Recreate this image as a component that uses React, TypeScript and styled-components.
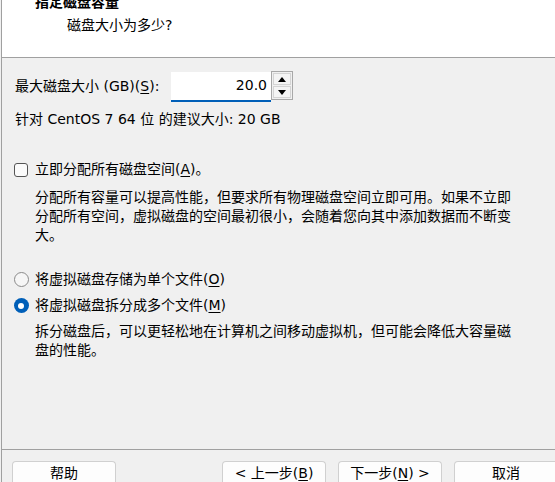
import styled, { createGlobalStyle } from "styled-components";

const GlobalStyle = createGlobalStyle`
  html, body {
    margin: 0;
    padding: 0;
    overflow: hidden;
    background: #f0f0f0;
  }
  body {
    font-family: "DejaVu Sans", "Noto Sans CJK SC", sans-serif;
    font-size: 14px;
    color: #000;
  }
`;

const Window = styled.div`
  width: 566px;
  height: 500px;
  margin-left: 1px;
  border-left: 1px solid #a0a0a0;
  display: flex;
  flex-direction: column;
  background: #f0f0f0;
  line-height: 19px;
`;

const Header = styled.header`
  height: 57px;
  flex-shrink: 0;
  background: #fff;
  border-bottom: 1px solid #a0a0a0;
  overflow: hidden;
`;

const Title = styled.div`
  margin-top: -7px;
  padding-left: 33px;
  font-weight: bold;
`;

const Subtitle = styled.div`
  margin-top: 4px;
  padding-left: 65px;
`;

const Content = styled.main`
  flex: 1;
  padding: 13px 0 0 11px;
`;

const SizeRow = styled.div`
  display: flex;
  align-items: flex-start;
  padding-left: 2px;
`;

const SizeLabel = styled.label`
  flex: 0 0 156px;
  margin-top: 6px;
  white-space: nowrap;
`;

const SizeInput = styled.input`
  box-sizing: border-box;
  width: 100px;
  height: 30px;
  margin: 1px 0 0;
  padding: 0 4px 2px 0;
  border: none;
  border-bottom: 2px solid #005fb8;
  background: #fff;
  font: inherit;
  text-align: right;
  color: #000;
  outline: none;
`;

const Spinner = styled.div`
  box-sizing: border-box;
  width: 22px;
  height: 29px;
  border: 1px solid #a8a8a8;
  padding: 1px;
  display: flex;
  flex-direction: column;
  gap: 1px;
`;

const SpinButton = styled.div`
  flex: 1;
  border: 1px solid #d4d4d4;
  background: #f4f4f4;
  display: flex;
  align-items: center;
  justify-content: center;
`;

const Hint = styled.div`
  margin-top: 8px;
  padding-left: 2px;
`;

const OptionRow = styled.div<{ $top: number }>`
  display: flex;
  align-items: center;
  height: 19px;
  margin-top: ${(p) => p.$top}px;
`;

const ControlSlot = styled.span`
  flex: 0 0 16px;
  display: flex;
  align-items: center;
  justify-content: center;
`;

const CheckBox = styled.span`
  box-sizing: border-box;
  width: 14px;
  height: 14px;
  border: 1px solid #555;
  border-radius: 3px;
  background: #fbfbfb;
`;

const Radio = styled.span<{ $checked?: boolean }>`
  box-sizing: border-box;
  width: 15px;
  height: 15px;
  border-radius: 50%;
  border: ${(p) => (p.$checked ? "none" : "1px solid #8a8a8a")};
  background: ${(p) => (p.$checked ? "#005fb8" : "#f6f6f6")};
  display: flex;
  align-items: center;
  justify-content: center;
`;

const RadioDot = styled.span`
  width: 6px;
  height: 6px;
  border-radius: 50%;
  background: #fff;
`;

const OptionLabel = styled.span`
  margin-left: 6px;
  white-space: nowrap;
`;

const Description = styled.p<{ $top: number }>`
  margin: ${(p) => p.$top}px 0 0 22px;
  width: 484px;
`;

const Key = styled.u`
  text-underline-offset: 2px;
`;

const Footer = styled.footer`
  box-sizing: border-box;
  height: 51px;
  flex-shrink: 0;
  border-top: 1px solid #a0a0a0;
  padding: 11px 10px 0;
  display: flex;
  justify-content: space-between;
  align-items: flex-start;
`;

const ButtonGroup = styled.div`
  display: flex;
  gap: 12px;
`;

const DialogButton = styled.button`
  box-sizing: border-box;
  width: 104px;
  height: 25px;
  padding: 0;
  background: #fdfdfd;
  border: 1px solid #d0d0d0;
  border-bottom-color: #b5b5b5;
  border-radius: 4px;
  font: inherit;
  line-height: 19px;
  color: #000;
`;

const Arrow = ({ up }: { up?: boolean }) => (
  <svg width="8" height="5" viewBox="0 0 8 5">
    <path d={up ? "M0 5 L4 0 L8 5 Z" : "M0 0 L8 0 L4 5 Z"} fill="#000" />
  </svg>
);

export default function App() {
  return (
    <>
      <GlobalStyle />
      <Window>
        <Header>
          <Title>指定磁盘容量</Title>
          <Subtitle>磁盘大小为多少?</Subtitle>
        </Header>
        <Content>
          <SizeRow>
            <SizeLabel>
              最大磁盘大小 (GB)(<Key>S</Key>):
            </SizeLabel>
            <SizeInput readOnly value="20.0" />
            <Spinner>
              <SpinButton>
                <Arrow up />
              </SpinButton>
              <SpinButton>
                <Arrow />
              </SpinButton>
            </Spinner>
          </SizeRow>
          <Hint>针对 CentOS 7 64 位 的建议大小: 20 GB</Hint>

          <OptionRow $top={31}>
            <ControlSlot>
              <CheckBox />
            </ControlSlot>
            <OptionLabel>
              立即分配所有磁盘空间(<Key>A</Key>)。
            </OptionLabel>
          </OptionRow>
          <Description $top={9}>
            分配所有容量可以提高性能，但要求所有物理磁盘空间立即可用。如果不立即分配所有空间，虚拟磁盘的空间最初很小，会随着您向其中添加数据而不断变大。
          </Description>

          <OptionRow $top={25}>
            <ControlSlot>
              <Radio />
            </ControlSlot>
            <OptionLabel>
              将虚拟磁盘存储为单个文件(<Key>O</Key>)
            </OptionLabel>
          </OptionRow>
          <OptionRow $top={7}>
            <ControlSlot>
              <Radio $checked>
                <RadioDot />
              </Radio>
            </ControlSlot>
            <OptionLabel>
              将虚拟磁盘拆分成多个文件(<Key>M</Key>)
            </OptionLabel>
          </OptionRow>
          <Description $top={7}>
            拆分磁盘后，可以更轻松地在计算机之间移动虚拟机，但可能会降低大容量磁盘的性能。
          </Description>
        </Content>
        <Footer>
          <DialogButton>帮助</DialogButton>
          <ButtonGroup>
            <DialogButton>
              &lt; 上一步(<Key>B</Key>)
            </DialogButton>
            <DialogButton>
              下一步(<Key>N</Key>) &gt;
            </DialogButton>
            <DialogButton>取消</DialogButton>
          </ButtonGroup>
        </Footer>
      </Window>
    </>
  );
}
